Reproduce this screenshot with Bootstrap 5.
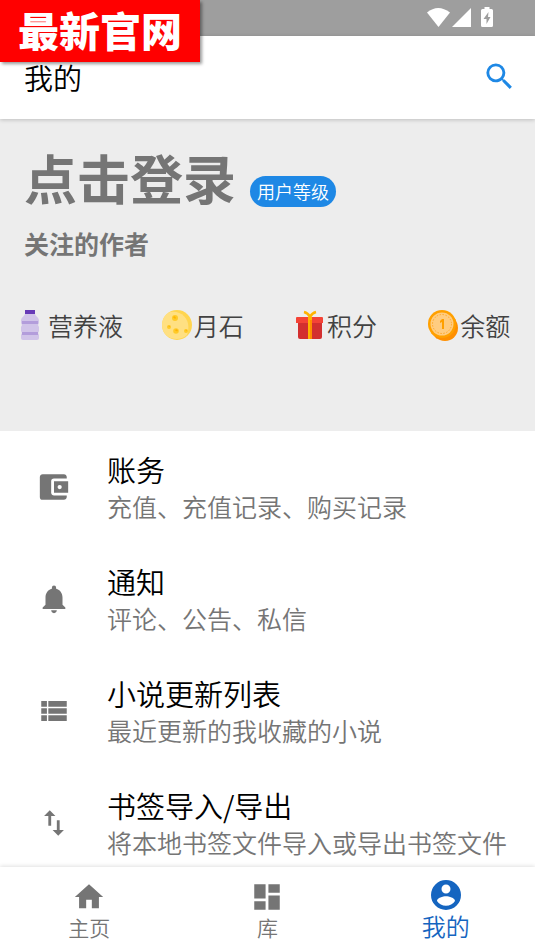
<!DOCTYPE html>
<html lang="zh-CN">
<head>
<meta charset="utf-8">
<meta name="viewport" content="width=device-width, initial-scale=1">
<title>我的</title>
<link href="https://cdn.jsdelivr.net/npm/bootstrap@5.3.0/dist/css/bootstrap.min.css" rel="stylesheet">
<style>
  body { font-family: "Noto Sans CJK SC", sans-serif; font-weight: 350; color: #000; background: #fff; }
  .status-bar { height: 36px; background: #9e9e9e; padding-right: 40px; }
  .ribbon { background: #f00; color: #fff; font-size: 41px; font-weight: 900; line-height: 58px; padding-bottom: 4px; width: 200px; box-shadow: 2px 2px 3px rgba(0,0,0,.4); z-index: 5; }
  .app-bar { height: 83px; padding: 0 18px 2px 24px; box-shadow: 0 1px 4px rgba(0,0,0,.2); z-index: 2; }
  .app-title { font-size: 29px; line-height: 40px; font-weight: 350; }
  .profile { background: #ededed; height: 312px; padding-top: 22px; }
  .muted { color: #757575; }
  .login { font-size: 53px; line-height: 72px; font-weight: 700; }
  .level { font-size: 18px; line-height: 31px; padding: 0 7px; background: #1e88e5; margin: 28px 0 0 14px; }
  .follow { font-size: 25px; line-height: 36px; font-weight: 700; padding-left: 24px; margin-top: 12px; }
  .stats { margin-top: 46px; padding-left: 2px; color: #424242; font-size: 25px; line-height: 36px; }
  .stats a { gap: 2px; }
  .entry { height: 112px; }
  .entry-icon { width: 107px; padding-left: 37px; flex: none; }
  .entry-title { font-size: 29px; line-height: 38px; }
  .entry-text { font-size: 25px; line-height: 36px; color: #757575; }
  .scroller { scrollbar-width: none; }
  .bottom-bar { height: 84px; box-shadow: 0 -1px 4px rgba(0,0,0,.12); z-index: 2; }
  .tab-link { color: #757575; font-size: 21px; line-height: 26px; padding-top: 13px; }
  .tab-link.active { color: #1565c0; font-size: 24px; padding-top: 10px; }
</style>
</head>
<body>
<div class="d-flex flex-column vh-100 overflow-hidden position-relative">
  <div class="ribbon position-absolute top-0 start-0 text-center">最新官网</div>

  <div class="status-bar d-flex justify-content-end align-items-center flex-shrink-0">
    <svg width="68" height="22" viewBox="0 0 68 22" fill="#fff" aria-hidden="true">
      <path d="M0 5.500Q11-3.500 23 5.500L11.500 20Z"/>
      <path d="M25 20H44V1Z"/>
      <path fill-rule="evenodd" d="M57.500 0h5v2h2q1.500 0 1.500 1.500v15q0 1.500-1.500 1.500h-9q-1.500 0-1.500-1.500v-15Q54 2 55.500 2h2ZM61.500 5l-5 7h3v5l4-7h-2.500Z"/>
    </svg>
  </div>

  <header class="app-bar bg-white d-flex align-items-center justify-content-between flex-shrink-0 position-relative">
    <h1 class="app-title mb-0">我的</h1>
    <button type="button" class="btn p-0 border-0 lh-1" aria-label="搜索">
      <svg width="35" height="35" viewBox="0 0 24 24" fill="#1e88e5"><path d="M15.500 14h-.79l-.28-.27A6.470 6.470 0 0 0 16 9.500 6.500 6.500 0 1 0 9.500 16c1.610 0 3.090-.59 4.230-1.570l.27.28v.79l5 4.990L20.490 19l-4.990-5zm-6 0C7.010 14 5 11.990 5 9.500S7.010 5 9.500 5 14 7.010 14 9.500 11.990 14 9.500 14z"/></svg>
    </button>
  </header>

  <main class="scroller flex-grow-1 overflow-auto">
    <section class="profile">
      <div class="d-flex align-items-center ps-4">
        <a href="#login" class="login muted text-decoration-none">点击登录</a>
        <span class="level rounded-pill text-white">用户等级</span>
      </div>
      <div class="follow muted">关注的作者</div>
      <div class="stats row g-0">
        <div class="col-3"><a href="#nutrient" class="d-flex align-items-center justify-content-center text-reset text-decoration-none">
          <svg width="32" height="32" viewBox="0 0 32 32" aria-hidden="true">
            <path fill="#d1c4e9" d="M11 5h10c1 3 4 3 4 7v2l-1 2 1 2v4l-1 2 1 2v3q0 2-2 2H9q-2 0-2-2v-3l1-2-1-2v-4l1-2-1-2v-2c0-4 3-4 4-7Z"/>
            <path fill="#b39ddb" d="M8 12h16v3H8zM8 23h16v3H8z"/><path fill="#673ab7" d="M11 1h10v4H11z"/>
          </svg>营养液</a></div>
        <div class="col-3"><a href="#moonstone" class="d-flex align-items-center justify-content-center text-reset text-decoration-none">
          <svg width="32" height="32" viewBox="0 0 32 32" aria-hidden="true">
            <circle cx="17" cy="16" r="15" fill="#ffd54f"/><path fill="#ffe082" d="M10 3C23 1 32 12 27 26 19 34 2 30 2 16 2 10 5 5 10 3Z"/>
            <g fill="#ffca28"><circle cx="15" cy="9" r="3"/><circle cx="9" cy="18" r="2"/><circle cx="16" cy="22" r="2.800"/><circle cx="26" cy="22" r="2"/></g>
            <path d="M13 8q2-2 3 1-1 2-3-1ZM15 21q2-2 3 1-2 1-3-1ZM8 17q2-1 2 1ZM25 21q2-1 2 1Z" fill="#ffb300"/>
          </svg>月石</a></div>
        <div class="col-3"><a href="#points" class="d-flex align-items-center justify-content-center text-reset text-decoration-none">
          <svg width="32" height="32" viewBox="0 0 32 32" aria-hidden="true">
            <path fill="#d32f2f" d="M5 14h24v14q0 2-2 2H7q-2 0-2-2Z"/><path fill="#f44336" d="M3 9q0-1 1-1h25q1 0 1 1v5H3Z"/>
            <path fill="#ffb300" d="M15 8h4v22h-4z"/><path fill="#ff8f00" d="M17 11h2v19h-2z"/>
            <path fill="none" stroke="#ffb300" stroke-width="2.500" d="M11 3q4 1 6 5 2-4 6-5"/>
          </svg>积分</a></div>
        <div class="col-3"><a href="#balance" class="d-flex align-items-center justify-content-center text-reset text-decoration-none">
          <svg width="32" height="32" viewBox="0 0 32 32" aria-hidden="true">
            <circle cx="19" cy="19" r="13" fill="#ff8f00"/><path fill="#ff8f00" d="m5 24 6 6L30 11l-5-5Z"/><circle cx="16" cy="15" r="14" fill="#ffa000"/><circle cx="16" cy="15" r="11.500" fill="#ffcc80"/>
            <circle cx="16" cy="15" r="9.500" fill="none" stroke="#ffa726" stroke-width="1" stroke-dasharray="1.500 1.500"/>
            <path fill="#ffa000" d="M16 10H18v10h-2v-7l-2 1v-2Z"/>
          </svg>余额</a></div>
      </div>
    </section>

    <nav class="list-group list-group-flush" aria-label="功能">
      <a href="#account" class="entry d-flex align-items-center text-reset text-decoration-none">
        <span class="entry-icon"><svg width="34" height="34" viewBox="0 0 24 24" fill="#757575"><path d="M21 18v1c0 1.100-.9 2-2 2H4a2 2 0 0 1-2-2V5c0-1.100.89-2 2-2h15c1.100 0 2 .9 2 2v1h-9a2 2 0 0 0-2 2v8c0 1.100.89 2 2 2h9zm-9-2h10V8H12v8zm4-2.500a1.500 1.500 0 1 1 0-3 1.500 1.500 0 0 1 0 3z"/></svg></span>
        <span class="text-nowrap"><span class="entry-title d-block">账务</span><span class="entry-text d-block">充值、充值记录、购买记录</span></span>
      </a>
      <a href="#notice" class="entry d-flex align-items-center text-reset text-decoration-none">
        <span class="entry-icon"><svg width="34" height="34" viewBox="0 0 24 24" fill="#757575"><path d="M12 22c1.100 0 2-.9 2-2h-4c0 1.100.89 2 2 2zm6-6v-5c0-3.070-1.640-5.640-4.500-6.320V4a1.500 1.500 0 0 0-3 0v.68C7.630 5.360 6 7.920 6 11v5l-2 2v1h16v-1l-2-2z"/></svg></span>
        <span class="text-nowrap"><span class="entry-title d-block">通知</span><span class="entry-text d-block">评论、公告、私信</span></span>
      </a>
      <a href="#updates" class="entry d-flex align-items-center text-reset text-decoration-none">
        <span class="entry-icon"><svg width="34" height="34" viewBox="0 0 24 24" fill="#757575"><path d="M3 14h4v-4H3v4zm0 5h4v-4H3v4zM3 9h4V5H3v4zm5 5h13v-4H8v4zm0 5h13v-4H8v4zM8 5v4h13V5H8z"/></svg></span>
        <span class="text-nowrap"><span class="entry-title d-block">小说更新列表</span><span class="entry-text d-block">最近更新的我收藏的小说</span></span>
      </a>
      <a href="#bookmarks" class="entry d-flex align-items-center text-reset text-decoration-none">
        <span class="entry-icon"><svg width="34" height="34" viewBox="0 0 24 24" fill="#757575"><path d="M16 17.010V10h-2v7.010h-3L15 21l4-3.990h-3zM9 3 5 6.990h3V14h2V6.990h3L9 3z"/></svg></span>
        <span class="text-nowrap"><span class="entry-title d-block">书签导入/导出</span><span class="entry-text d-block">将本地书签文件导入或导出书签文件</span></span>
      </a>
    </nav>
  </main>

  <nav class="bottom-bar bg-white row g-0 flex-shrink-0 position-relative" aria-label="主导航">
    <a href="#home" class="tab-link col-4 d-flex flex-column align-items-center text-decoration-none">
      <svg width="34" height="34" viewBox="0 0 24 24" fill="currentColor"><path d="M10 20v-6h4v6h5v-8h3L12 3 2 12h3v8z"/></svg>主页</a>
    <a href="#library" class="tab-link col-4 d-flex flex-column align-items-center text-decoration-none">
      <svg width="34" height="34" viewBox="0 0 24 24" fill="currentColor"><path d="M3 13h8V3H3v10zm0 8h8v-6H3v6zm10 0h8V11h-8v10zm0-18v6h8V3h-8z"/></svg>库</a>
    <a href="#mine" class="tab-link active col-4 d-flex flex-column align-items-center text-decoration-none" aria-current="page">
      <svg width="36" height="36" viewBox="0 0 24 24" fill="currentColor"><path d="M12 2a10 10 0 1 0 0 20 10 10 0 0 0 0-20zm0 3a3 3 0 1 1 0 6 3 3 0 0 1 0-6zm0 14.200a7.200 7.200 0 0 1-6-3.220c.03-1.990 4-3.080 6-3.080 1.990 0 5.970 1.090 6 3.080a7.200 7.200 0 0 1-6 3.220z"/></svg>我的</a>
  </nav>
</div>
<script src="https://cdn.jsdelivr.net/npm/bootstrap@5.3.0/dist/js/bootstrap.bundle.min.js"></script>
</body>
</html>
